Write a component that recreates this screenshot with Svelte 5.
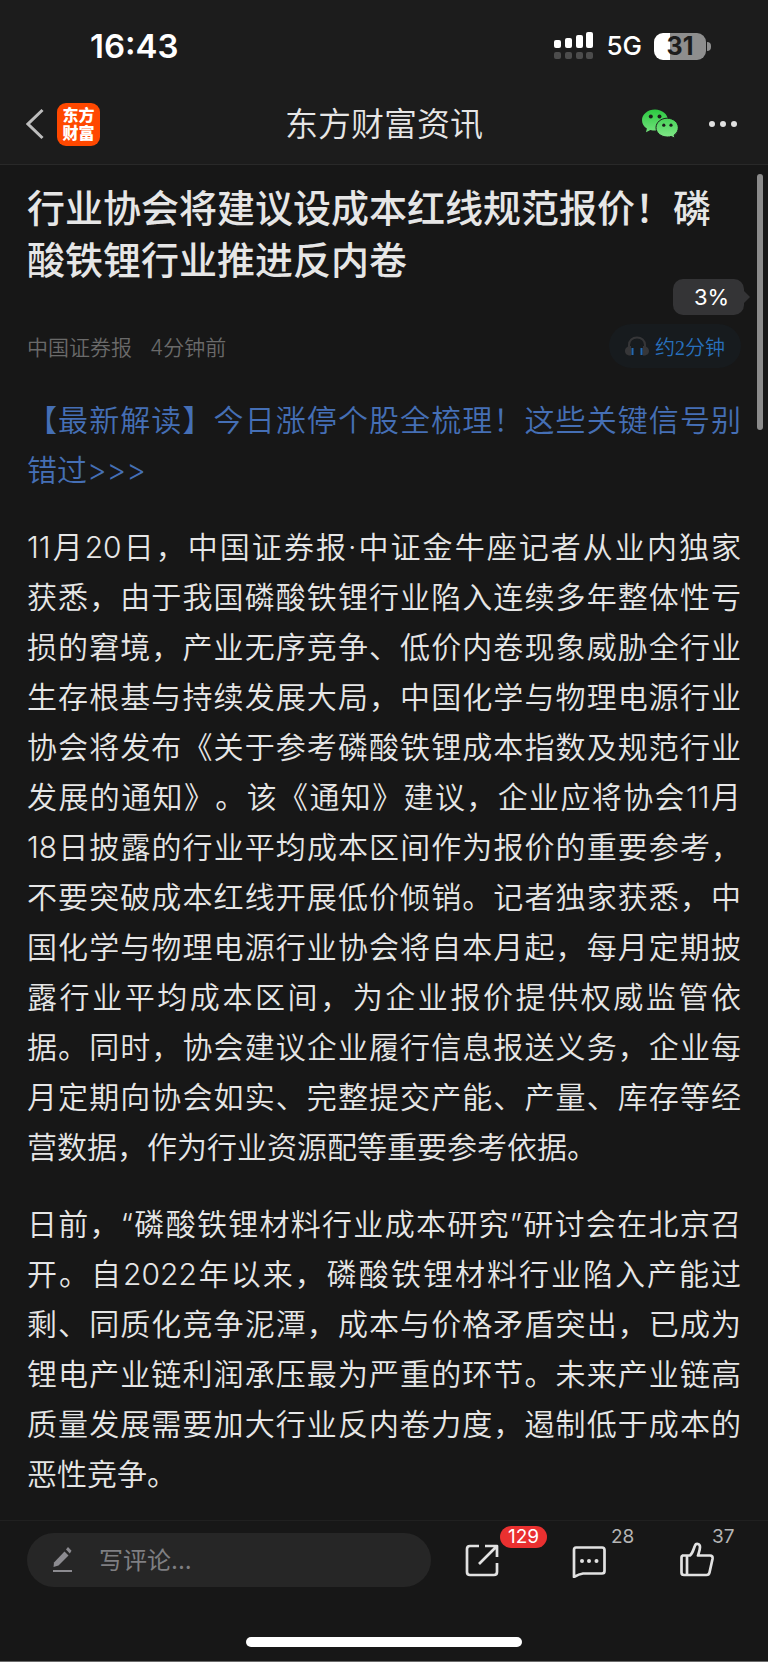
<script>
    let comment = '';

    // \u2060 keeps a word or a date together on one line
    const article = {
        title: '行业协会将建议设成本红线规范报价！磷酸铁锂行业推进反内卷',
        source: '中国证券报',
        time: '4分钟前',
        promo: '【最新解读】今日涨停个股全梳理！这些关键信号别错过>>>',
        paragraphs: [
            '11月20日，中国证券报·中证金牛座记者从业内独家获\u2060悉，由于我国磷酸铁锂行业陷入连续多年整体性亏损的窘境，产业无序竞争、低价内卷现象威胁全行业生存根基与持续发展大局，中国化学与物理电源行业协会将发布《关于参考磷酸铁锂成本指数及规范行业发展的通知》。该《通知》建议，企业应将协会11月18\u2060日披露的行业平均成本区间作为报价的重要参考，不要突破成本红线开展低价倾销。记者独家获悉，中国化学与物理电源行业协会将自本月起，每月定期披露行业平均成本区间，为企业报价提供权威监管依据。同时，协会建议企业履行信息报送义务，企业每月定期向协会如实、完整提交产能、产量、库存等经营数据，作为行业资源配等重要参考依据。',
            '日前，“磷酸铁锂材料行业成本研究”研讨会在北京召开。自2022年以来，磷酸铁锂材料行业陷入产能过剩、同质化竞争泥潭，成本与价格矛盾突出，已成为锂电产业链利润承压最为严重的环节。未来产业链高质量发展需要加大行业反内卷力度，遏制低于成本的恶性竞争。'
        ]
    };
</script>

<div class="page">
    <div class="top">
        <div class="status">
            <span class="clock">16:43</span>
            <div class="status-right">
                <svg class="signal" width="40" height="28" viewBox="0 0 40 28">
                    <g fill="#fff">
                        <rect x="0" y="8" width="7" height="8" rx="2" />
                        <rect x="11" y="6" width="7" height="10" rx="2" />
                        <rect x="22" y="3" width="7" height="13" rx="2" />
                        <rect x="32" y="0" width="7" height="16" rx="2" />
                    </g>
                    <g fill="#4c4c4c">
                        <rect x="0" y="20" width="7" height="7" rx="2" />
                        <rect x="11" y="20" width="7" height="7" rx="2" />
                        <rect x="22" y="20" width="7" height="7" rx="2" />
                        <rect x="32" y="20" width="7" height="7" rx="2" />
                    </g>
                </svg>
                <span class="network">5G</span>
                <div class="battery"><span>31</span></div>
            </div>
        </div>

        <header>
            <div class="left">
                <button class="icon-button" aria-label="返回">
                    <svg width="18" height="32" viewBox="0 0 18 32" fill="none" stroke="#bdbdbd" stroke-width="3">
                        <path d="M16.500 2 L2 16 L16.500 30" />
                    </svg>
                </button>
                <a class="logo" href="#home"><span>东方</span><span>财富</span></a>
            </div>
            <h2>东方财富资讯</h2>
            <div class="right">
                <button class="icon-button" aria-label="微信">
                    <svg width="36" height="30" viewBox="0 0 36 30">
                        <defs>
                            <linearGradient id="green" x1="0" y1="0" x2="0" y2="30" gradientUnits="userSpaceOnUse">
                                <stop offset="0" stop-color="#2bc840" />
                                <stop offset="1" stop-color="#86e98c" />
                            </linearGradient>
                        </defs>
                        <path fill="url(#green)" d="M13 .500C5.800.500 0 5.300 0 11.200c0 3.400 1.900 6.400 4.900 8.300L4 23.200l4.400-2.300c1.500.400 3 .600 4.600.600 7.200 0 13-4.700 13-10.300S20.200.500 13 .500z" />
                        <path fill="url(#green)" stroke="#1c1c1c" stroke-width="1" d="M25.200 9.200C19 9.200 14 13.400 14 18.600S19 28 25.200 28c1.500 0 2.900-.200 4.100-.600l3.600 1.900-.800-3.200c2.600-1.700 4.200-4.400 4.200-7.500 0-5.200-5-9.400-11.100-9.400z" />
                        <g fill="#1c1c1c">
                            <circle cx="8.800" cy="7.500" r="2" />
                            <circle cx="17.500" cy="7.500" r="2" />
                            <circle cx="21.800" cy="16.200" r="1.600" />
                            <circle cx="29" cy="16.200" r="1.600" />
                        </g>
                    </svg>
                </button>
                <button class="icon-button" aria-label="更多">
                    <svg width="28" height="8" viewBox="0 0 28 8" fill="#e0e0e0">
                        <circle cx="3" cy="4" r="3" />
                        <circle cx="14" cy="4" r="3" />
                        <circle cx="25" cy="4" r="3" />
                    </svg>
                </button>
            </div>
        </header>
    </div>

    <main>
        <h1>{article.title}</h1>

        <div class="meta">
            <span>{article.source}</span>
            <span>{article.time}</span>
            <button class="listen">
                <svg width="24" height="20" viewBox="0 0 24 20" fill="none">
                    <path stroke="#363638" stroke-width="2" d="M4 12V9C4 4.500 7.500 1.500 12 1.500S20 4.500 20 9v3" />
                    <path fill="#363638" d="M6 10C2.500 10 0 12 0 15s2.500 4.500 5 4.500h1zM18 10c3.500 0 6 2 6 5s-2.500 4.500-5 4.500h-1z" />
                    <path stroke="#2469b0" stroke-width="2" d="M7.500 12v7M16.500 12v7" />
                </svg>
                约2分钟
            </button>
        </div>

        <a class="promo" href="#promo">{article.promo}</a>

        {#each article.paragraphs as text}
            <p>{text}</p>
        {/each}

        <div class="progress">3%</div>
        <div class="scrollbar"></div>
    </main>

    <footer>
        <div class="actions">
            <label class="comment-box">
                <svg width="20" height="28" viewBox="0 0 20 28" fill="#8c8b90">
                    <path d="M11.500 5.500L15.500 9.500L5.500 19.500L.500 21L1 16.500z" />
                    <path d="M13 3.500L15 1l3.500 3.800L16.800 7.500z" />
                    <rect x="0" y="24" width="19" height="2" />
                </svg>
                <input type="text" placeholder="写评论..." aria-label="写评论" bind:value={comment}>
            </label>

            <button class="action" aria-label="分享">
                <svg width="36" height="36" viewBox="0 0 36 36">
                    <path d="M16 4H7Q4 4 4 7V30Q4 33 7 33H31Q34 33 34 30V21M22 4H34V15M33 5L16 22" />
                </svg>
                <span class="badge">129</span>
            </button>
            <button class="action talk" aria-label="评论">
                <svg width="36" height="36" viewBox="0 0 36 36">
                    <path d="M5 5.500H31Q33.500 5.500 33.500 8V29Q33.500 31.500 31 31.500H12Q8 32 3 35V8Q3 5.500 5 5.500z" />
                    <g class="dots">
                        <circle cx="11" cy="19" r="2" />
                        <circle cx="18" cy="19" r="2" />
                        <circle cx="25.500" cy="19" r="2" />
                    </g>
                </svg>
                <span class="count">28</span>
            </button>
            <button class="action like" aria-label="点赞">
                <svg width="36" height="36" viewBox="0 0 36 36">
                    <path d="M3 13.500H11C14 11 14.500 7 16 3.500C17 1 21 1.500 21 5C21 8 20 10.500 19 13.500H31Q34 13.500 33.500 17L30.500 30.500Q30 33 27.500 33H5Q2.500 33 2.500 30.500V15.500Q2.500 13.500 4.500 13.500M8 14V33" />
                </svg>
                <span class="count">37</span>
            </button>
        </div>
        <div class="home-bar"></div>
    </footer>
</div>

<style>
    :global(body) {
        margin: 0;
        background-color: #171717;
    }

    .page {
        display: flex;
        flex-direction: column;
        min-height: 100vh;
        box-sizing: border-box;
        border-bottom: 1px solid #6a6a6a;
        background-color: #171717;
        color: #e6e6e6;
        font-family: Inter, "Noto Sans CJK SC", sans-serif;
        text-spacing-trim: space-all;
    }

    button {
        padding: 0;
        border: none;
        background: none;
        font-family: inherit;
        cursor: pointer;
    }

    svg {
        display: block;
        flex: none;
    }

    .top {
        background-color: #1c1c1c;
        border-bottom: 1px solid #292929;
    }

    .status {
        display: flex;
        justify-content: space-between;
        align-items: center;
        height: 92px;
        padding: 0 62px 0 90px;
        color: #fff;
    }

    .clock {
        font-size: 33px;
        font-weight: 600;
    }

    .status-right {
        display: flex;
        align-items: center;
        gap: 12px;
    }

    .network {
        font-size: 26px;
        font-weight: 500;
        line-height: 28px;
    }

    .battery {
        position: relative;
        width: 52px;
        height: 27px;
        border-radius: 9px;
        background: linear-gradient(to right, #fff 31%, #8e8e8e 31%);
        color: #1c1c1c;
        font-size: 25px;
        font-weight: 700;
        line-height: 27px;
        text-align: center;
    }

    .battery::after {
        content: "";
        position: absolute;
        top: 9px;
        right: -5px;
        width: 4px;
        height: 9px;
        border-radius: 0 4px 4px 0;
        background-color: #8e8e8e;
    }

    header {
        display: grid;
        grid-template-columns: 1fr auto 1fr;
        align-items: center;
        height: 72px;
        padding: 0 26px 8px;
        box-sizing: border-box;
    }

    .left, .right {
        display: flex;
        align-items: center;
    }

    .left {
        gap: 13px;
    }

    .right {
        justify-content: flex-end;
        gap: 31px;
        padding-right: 5px;
    }

    .logo {
        display: flex;
        flex-direction: column;
        justify-content: center;
        width: 43px;
        height: 43px;
        border-radius: 9px;
        background-color: #ff4800;
        color: #fff;
        font-size: 16px;
        font-weight: 900;
        line-height: 18px;
        text-align: center;
        text-decoration: none;
    }

    h2 {
        margin: 0;
        font-size: 33px;
        font-weight: 350;
        line-height: 48px;
    }

    main {
        position: relative;
        flex: 1;
        padding: 17px 27px 0;
    }

    h1 {
        margin: 0;
        font-size: 38px;
        font-weight: 500;
        line-height: 52px;
    }

    .meta {
        display: flex;
        align-items: center;
        gap: 18px;
        margin-top: 38px;
        color: #6a6a6a;
        font-size: 21px;
        font-weight: 350;
    }

    .listen {
        display: flex;
        align-items: center;
        gap: 6px;
        height: 44px;
        margin-left: auto;
        padding: 0 16px;
        border-radius: 22px;
        background-color: #171b1e;
        color: #2870bd;
        font-family: "Liberation Serif", "Noto Sans CJK SC", serif;
        font-size: 20px;
        font-weight: 350;
    }

    .promo, p {
        display: block;
        margin: 27px 0 0;
        font-size: 30px;
        font-weight: 350;
        line-height: 50px;
        text-align: justify;
    }

    .promo {
        color: #456fb5;
        text-decoration: none;
    }

    .progress {
        position: absolute;
        top: 114px;
        right: 24px;
        width: 71px;
        height: 36px;
        padding-left: 6px;
        box-sizing: border-box;
        border-radius: 10px;
        background-color: #343436;
        color: #fff;
        font-size: 22px;
        line-height: 36px;
        text-align: center;
    }

    .progress::after {
        content: "";
        position: absolute;
        top: 12px;
        left: 100%;
        border: 6px solid transparent;
        border-left-color: #343436;
        border-right: none;
    }

    .scrollbar {
        position: absolute;
        top: 9px;
        right: 5px;
        width: 6px;
        height: 256px;
        border-radius: 3px;
        background-color: #8b8b8b;
    }

    footer {
        margin-top: 13px;
        border-top: 1px solid #202020;
    }

    .actions {
        display: flex;
        align-items: center;
        gap: 72px;
        padding: 12px 53px 0 27px;
    }

    .comment-box {
        display: flex;
        flex: 1;
        align-items: center;
        gap: 26px;
        min-width: 0;
        height: 54px;
        margin-right: -40px;
        padding: 0 26px;
        box-sizing: border-box;
        border-radius: 27px;
        background-color: #262626;
    }

    .comment-box input {
        flex: 1;
        min-width: 0;
        padding: 0;
        border: none;
        outline: none;
        background: none;
        color: #e2e2e2;
        font-family: inherit;
        font-size: 24px;
    }

    .comment-box input::placeholder {
        color: #7f7f82;
        opacity: 1;
    }

    .action {
        position: relative;
        width: 36px;
        height: 36px;
    }

    .action svg {
        fill: none;
        stroke: #e2e2e2;
        stroke-width: 2.7;
        stroke-linejoin: round;
    }

    .action .dots {
        fill: #e2e2e2;
        stroke: none;
    }

    .badge, .count {
        position: absolute;
        top: -16px;
        left: 37px;
        font-size: 19px;
        line-height: 22px;
    }

    .badge {
        padding: 0 8px;
        border-radius: 11px;
        background-color: #e93030;
        color: #fff;
    }

    .count {
        color: #b5b5b5;
    }

    .talk .count {
        left: 40px;
    }

    .like .count {
        left: 33px;
    }

    .home-bar {
        width: 36%;
        height: 10px;
        margin: 50px auto 14px;
        border-radius: 5px;
        background-color: #fff;
    }
</style>
